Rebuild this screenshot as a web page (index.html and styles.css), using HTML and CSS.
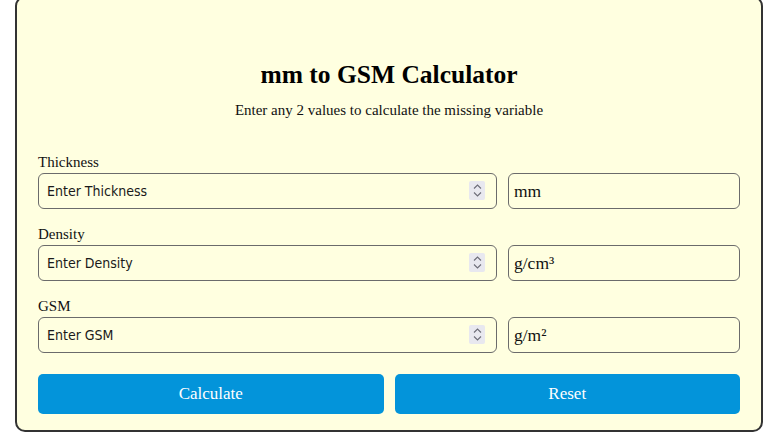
FILE: index.html
```html
<!DOCTYPE html>
<html lang="en">
<head>
    <meta charset="UTF-8">
    <meta name="viewport" content="width=device-width, initial-scale=1.0">
    <title>mm to GSM Calculator</title>
    <link rel="stylesheet" href="styles.css">
</head>
<body>
    <div class="calculator">
        <h2>mm to GSM Calculator</h2>
        <p class="intro">Enter any 2 values to calculate the missing variable</p>
        <form id="gsmForm">
            <div class="field">
                <label for="thickness">Thickness</label>
                <div class="field-row">
                    <div class="number-wrap">
                        <input type="number" id="thickness" name="thickness" placeholder="Enter Thickness">
                        <span class="spin"><svg width="9" height="13" viewBox="0 0 9 13"><path d="M1 4.5L4.5 1L8 4.5M1 8.5L4.5 12L8 8.5" fill="none" stroke="#6d6d78" stroke-width="1.1"/></svg></span>
                    </div>
                    <input type="text" class="unit" value="mm" readonly>
                </div>
            </div>
            <div class="field">
                <label for="density">Density</label>
                <div class="field-row">
                    <div class="number-wrap">
                        <input type="number" id="density" name="density" placeholder="Enter Density">
                        <span class="spin"><svg width="9" height="13" viewBox="0 0 9 13"><path d="M1 4.5L4.5 1L8 4.5M1 8.5L4.5 12L8 8.5" fill="none" stroke="#6d6d78" stroke-width="1.1"/></svg></span>
                    </div>
                    <input type="text" class="unit" value="g/cm³" readonly>
                </div>
            </div>
            <div class="field">
                <label for="gsm">GSM</label>
                <div class="field-row">
                    <div class="number-wrap">
                        <input type="number" id="gsm" name="gsm" placeholder="Enter GSM">
                        <span class="spin"><svg width="9" height="13" viewBox="0 0 9 13"><path d="M1 4.5L4.5 1L8 4.5M1 8.5L4.5 12L8 8.5" fill="none" stroke="#6d6d78" stroke-width="1.1"/></svg></span>
                    </div>
                    <input type="text" class="unit" value="g/m²" readonly>
                </div>
            </div>
            <div class="buttons">
                <button type="button" class="btn">Calculate</button>
                <button type="reset" class="btn">Reset</button>
            </div>
        </form>
    </div>
</body>
</html>
```

FILE: styles.css
```css
body {
    margin: 0;
    background-color: #ffffff;
    font-family: "Liberation Serif", "Times New Roman", serif;
    color: #111;
}

.calculator {
    width: 748px;
    box-sizing: border-box;
    margin: -4px 0 0 15px;
    padding: 63px 21px 16px;
    background-color: #ffffe0;
    border: 2px solid #333;
    border-radius: 10px;
}

h2 {
    margin: 0;
    font-size: 25.5px;
    line-height: 28px;
    text-align: center;
    color: #000;
}

.intro {
    margin: 12px 0 0;
    font-size: 15px;
    line-height: 18px;
    text-align: center;
}

form {
    margin-top: 35px;
}

.field {
    margin-bottom: 17px;
}

label {
    display: block;
    margin-bottom: 2px;
    font-size: 15px;
    line-height: 17px;
}

.field-row {
    display: grid;
    grid-template-columns: 459px 1fr;
    gap: 11px;
}

.number-wrap {
    position: relative;
}

input[type="number"],
.unit {
    width: 100%;
    height: 36px;
    box-sizing: border-box;
    margin: 0;
    border: 1px solid #6b6b6b;
    border-radius: 6px;
    background-color: #ffffe0;
    color: #111;
}

input[type="number"] {
    padding: 0 30px 0 8px;
    font-family: "DejaVu Sans Condensed", "DejaVu Sans", Verdana, sans-serif;
    font-size: 14px;
    -moz-appearance: textfield;
}

input[type="number"]::placeholder {
    color: #1a1a1a;
}

input[type="number"]::-webkit-inner-spin-button,
input[type="number"]::-webkit-outer-spin-button {
    -webkit-appearance: none;
    margin: 0;
}

.spin {
    position: absolute;
    top: 8px;
    right: 12px;
    width: 16px;
    height: 19px;
    display: flex;
    align-items: center;
    justify-content: center;
    background-color: #e8e8ef;
    border-radius: 2px;
}

.unit {
    padding: 0 5px;
    font-family: "Liberation Serif", "Times New Roman", serif;
    font-size: 17.5px;
}

.buttons {
    display: grid;
    grid-template-columns: 1fr 1fr;
    gap: 11px;
    margin-top: 21px;
}

.btn {
    height: 40px;
    border: none;
    border-radius: 5px;
    background-color: #0394da;
    color: white;
    font-family: "Liberation Serif", "Times New Roman", serif;
    font-size: 17px;
    cursor: pointer;
}

.btn:hover {
    background-color: #0278b3;
}
```
